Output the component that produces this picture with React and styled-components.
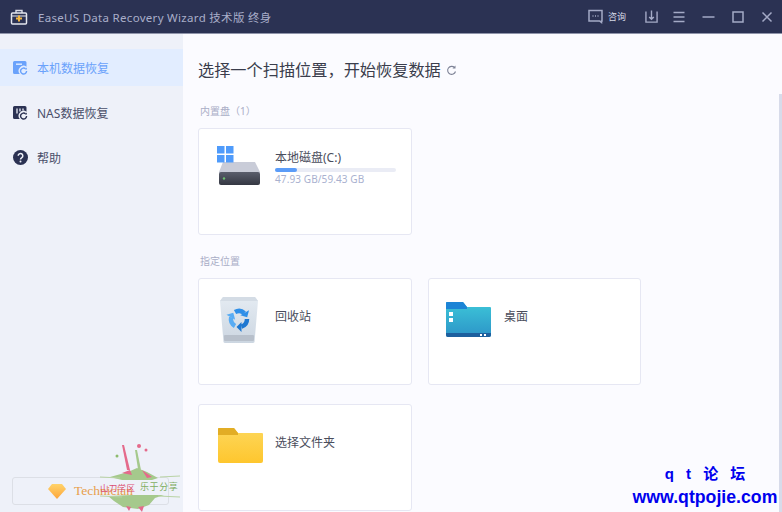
import React from "react";
import styled, { createGlobalStyle } from "styled-components";

const GlobalStyle = createGlobalStyle`
  html, body, #root {
    margin: 0;
    height: 100%;
  }
  body {
    font-family: "Noto Sans", "Noto Sans CJK SC", sans-serif;
    overflow: hidden;
  }
`;

const Page = styled.div`
  position: relative;
  width: 782px;
  height: 512px;
  display: flex;
  flex-direction: column;
  overflow: hidden;
  background: #fbfbff;
`;

const TitleBar = styled.header`
  height: 33px;
  flex: none;
  display: flex;
  align-items: center;
  padding: 0 9px 0 10px;
  background: #2b3253;
  border-bottom: 1px solid #8f94aa;
`;

const AppTitle = styled.span`
  margin-left: 10px;
  flex: 1;
  font-size: 11.5px;
  letter-spacing: 0.3px;
  color: #a9aec9;
`;

const Ask = styled.span`
  margin: 0 19px 0 5px;
  font-size: 9px;
  color: #d6d9e6;
`;

const BarIcon = styled.svg`
  display: block;
  flex: none;
  margin-left: ${(p) => p.$gap || 0}px;
  fill: none;
  stroke: #a4aac6;
  stroke-width: 1.5;
`;

const Body = styled.div`
  flex: 1;
  display: flex;
  min-height: 0;
`;

const Sidebar = styled.aside`
  width: 183px;
  flex: none;
  display: flex;
  flex-direction: column;
  padding-top: 15px;
  background: #eef1f9;
`;

const NavItem = styled.div`
  height: 37px;
  margin-bottom: 8px;
  display: flex;
  align-items: center;
  gap: 9px;
  padding-left: 13px;
  font-size: 12px;
  color: ${(p) => (p.$active ? "#6aa2fb" : "#4a4f6a")};
  background: ${(p) => (p.$active ? "#e2edff" : "transparent")};
`;

const UpgradeButton = styled.div`
  margin: auto 0 7px 12px;
  width: 157px;
  height: 28px;
  box-sizing: border-box;
  display: flex;
  align-items: center;
  justify-content: center;
  gap: 8px;
  border: 1px solid #dcdfe6;
  border-radius: 3px;
  font-family: "Liberation Serif", serif;
  font-size: 13.5px;
  color: #e8a04c;
`;

const Main = styled.main`
  flex: 1;
  padding: 0 0 0 15px;
`;

const Heading = styled.h1`
  margin: 23px 0 0;
  height: 24px;
  display: flex;
  align-items: center;
  gap: 5px;
  font-size: 16.2px;
  font-weight: 400;
  color: #3a3d4c;
`;

const SectionLabel = styled.div`
  font-size: 10px;
  line-height: 14px;
  color: #a9adc6;
  margin: ${(p) => p.$top}px 0 10px 2px;
`;

const CardGrid = styled.div`
  display: grid;
  grid-template-columns: 214px 213px;
  gap: 19px 16px;
`;

const Card = styled.div`
  height: 107px;
  box-sizing: border-box;
  display: flex;
  align-items: flex-start;
  padding: ${(p) => p.$top || 21}px 0 0 ${(p) => p.$left || 19}px;
  background: #fff;
  border: 1px solid #e6e7f3;
  border-radius: 3px;
`;

const CardIcon = styled.div`
  width: ${(p) => p.$width || 57}px;
  flex: none;
`;

const CardText = styled.div`
  flex: 1;
  padding: ${(p) => p.$top || 0}px 15px 0 0;
  font-size: 12px;
  line-height: 16px;
  color: #4a4d5c;
`;

const Track = styled.div`
  height: 4px;
  margin-top: 2px;
  background: #eaecf5;
  border-radius: 2px;
`;

const Fill = styled.div`
  height: 100%;
  background: #5b9cf8;
  border-radius: 2px;
`;

const Usage = styled.div`
  margin-top: 1px;
  font-size: 10px;
  line-height: 13px;
  letter-spacing: 0.1px;
  color: #a9b1cf;
`;

const ScrollThumb = styled.div`
  position: absolute;
  top: 94px;
  right: 0;
  bottom: 0;
  width: 3px;
  background: #d7dbea;
`;

const Splash = styled.svg`
  position: absolute;
  left: 96px;
  top: 440px;
  pointer-events: none;
`;

const SplashText = styled.span`
  position: absolute;
  left: 100px;
  top: 481px;
  font-size: 8.5px;
  letter-spacing: 0.3px;
  color: #dc4f72;
`;

const SplashNote = styled.span`
  position: absolute;
  left: 140px;
  top: 480px;
  font-size: 9px;
  letter-spacing: 0.6px;
  color: #7fae62;
`;

const Stamp = styled.div`
  position: absolute;
  right: 2px;
  bottom: 6px;
  width: 150px;
  text-align: center;
  font-family: "Liberation Sans", "Noto Sans CJK SC", sans-serif;
  font-weight: 700;
  color: #0000ee;
`;

const StampTitle = styled.div`
  font-size: 15px;
  line-height: 18px;
  word-spacing: 8px;
  margin-bottom: 5px;
`;

const StampUrl = styled.div`
  font-size: 17.7px;
  line-height: 18px;
`;

const BrandIcon = () => (
  <svg width="18" height="18" viewBox="0 0 18 18" fill="none" style={{ display: "block" }}>
    <path d="M6 5V2.500h6V5" stroke="#d9dbe6" strokeWidth="1.400" />
    <rect x="1.500" y="5" width="15" height="11" rx="1" stroke="#e4e6ee" strokeWidth="1.500" />
    <path d="M2 8h14" stroke="#e4e6ee" strokeWidth="1" />
    <path d="M9 7.500v6M6 10.500h6" stroke="#f4b63f" strokeWidth="2" />
  </svg>
);

const PcIcon = ({ color, nas }) => (
  <svg width="15" height="15" viewBox="0 0 15 15" style={{ display: "block" }}>
    <path d="M1.500 1h10.500a1.500 1.500 0 0 1 1.500 1.500v4.200A5 5 0 0 0 6.800 14H1.500A1.500 1.500 0 0 1 0 12.500v-10A1.500 1.500 0 0 1 1.500 1z" fill={color} />
    {nas ? (
      <path d="M4 3.500v5M7 3.500v3M10 3.500v2" stroke="#eef1f9" strokeWidth="1.300" />
    ) : (
      <rect x="3" y="3.500" width="6" height="1.400" fill="#e2edff" />
    )}
    <path d="M13.600 11a3 3 0 1 1-1-2.200" fill="none" stroke={color} strokeWidth="1.400" />
    <path d="M13.900 7.600v2h-2z" fill={color} />
  </svg>
);

const HelpIcon = () => (
  <svg width="15" height="15" viewBox="0 0 15 15" style={{ display: "block" }}>
    <circle cx="7.500" cy="7.500" r="7.500" fill="#2b3253" />
    <path d="M5.200 5.800a2.300 2.300 0 1 1 3.600 1.900c-.9.600-1.300 1-1.300 1.900" fill="none" stroke="#eef1f9" strokeWidth="1.500" />
    <circle cx="7.500" cy="11.600" r="1" fill="#eef1f9" />
  </svg>
);

const DiskIcon = () => (
  <svg width="44" height="41" viewBox="0 0 44 41" style={{ display: "block" }}>
    <defs>
      <linearGradient id="diskFront" x1="0" y1="0" x2="0" y2="1">
        <stop offset="0" stopColor="#5a5e6c" />
        <stop offset="1" stopColor="#343742" />
      </linearGradient>
    </defs>
    <path d="M6 16h32l5 10v1H2v-1z" fill="#c9ccd8" />
    <rect x="2" y="26" width="41" height="13" rx="2" fill="url(#diskFront)" />
    <circle cx="7" cy="32.500" r="1.200" fill="#6cc070" />
    <path d="M0 0h7.500v7.500H0zM9 0h7.500v7.500H9zM0 9h7.500v7.500H0zM9 9h7.500v7.500H9z" fill="#4f9bfb" />
  </svg>
);

const recycleArcs = [
  { angle: -120, color: "#2f8fe8" },
  { angle: 0, color: "#1f78d1" },
  { angle: 120, color: "#58acf4" },
];

const BinIcon = () => (
  <svg width="40" height="46" viewBox="0 0 40 46" style={{ display: "block" }}>
    <defs>
      <linearGradient id="binBody" x1="0" y1="0" x2="0" y2="1">
        <stop offset="0" stopColor="#e4ebf2" />
        <stop offset="1" stopColor="#ccd6e1" />
      </linearGradient>
    </defs>
    <path d="M3 0h32l3 4-3.500 41q0 1-2 1H5.500q-2 0-2-1L0 4z" fill="url(#binBody)" />
    <path d="M0 4 3 0h32l3 4z" fill="#d4dce5" />
    <rect x="4" y="38" width="30" height="6" rx="1" fill="#b8c0cb" />
    {recycleArcs.map((arc) => (
      <g key={arc.angle} transform={`rotate(${arc.angle} 19 22)`}>
        <circle cx="19" cy="22" r="8" fill="none" stroke={arc.color} strokeWidth="4.500" strokeDasharray="10 40.270" />
        <path d="M21.500 25v10L16.500 30z" fill={arc.color} />
      </g>
    ))}
  </svg>
);

const DesktopFolder = () => (
  <svg width="45" height="35" viewBox="0 0 45 35" style={{ display: "block" }}>
    <defs>
      <linearGradient id="deskBody" x1="0" y1="0" x2="0" y2="1">
        <stop offset="0" stopColor="#3dc6d8" />
        <stop offset="1" stopColor="#2c94c8" />
      </linearGradient>
    </defs>
    <path d="M1 0h16l4 5h23a1 1 0 0 1 1 1v27a2 2 0 0 1-2 2H2a2 2 0 0 1-2-2V1a1 1 0 0 1 1-1z" fill="url(#deskBody)" />
    <path d="M1 0h16l4 5 0 2H0V1a1 1 0 0 1 1-1z" fill="#1c84d6" />
    <path d="M0 31h45v2a2 2 0 0 1-2 2H2a2 2 0 0 1-2-2z" fill="#1d5f9e" />
    <path d="M3 10h4v4H3zM3 16h4v4H3zM34 32h2v2h-2zM38 32h2v2h-2z" fill="#fff" />
  </svg>
);

const YellowFolder = () => (
  <svg width="45" height="35" viewBox="0 0 45 35" style={{ display: "block" }}>
    <defs>
      <linearGradient id="yellowBody" x1="0" y1="0" x2="0" y2="1">
        <stop offset="0" stopColor="#fdd75a" />
        <stop offset="1" stopColor="#fec62e" />
      </linearGradient>
    </defs>
    <path d="M1 0h15l4 5h24a1 1 0 0 1 1 1v27a2 2 0 0 1-2 2H2a2 2 0 0 1-2-2V1a1 1 0 0 1 1-1z" fill="url(#yellowBody)" />
    <path d="M1 0h15l4 5 0 2H0V1a1 1 0 0 1 1-1z" fill="#e2ad25" />
  </svg>
);

export default function App() {
  return (
    <Page>
      <GlobalStyle />
      <TitleBar>
        <BrandIcon />
        <AppTitle>EaseUS Data Recovery Wizard 技术版 终身</AppTitle>
        <BarIcon width="15" height="15" viewBox="0 0 15 15">
          <path d="M1 1.500h13v10.500h-.5v1.500l-2-1.500H1z" />
          <path d="M4.500 7h1M7 7h1M9.500 7h1" />
        </BarIcon>
        <Ask>咨询</Ask>
        <BarIcon width="13" height="15" viewBox="0 0 14 15">
          <path d="M1 2v11.500h12V2M7 1v9M4.500 8 7 10.500 9.500 8" />
        </BarIcon>
        <BarIcon $gap={15} width="12" height="12" viewBox="0 0 12 12">
          <path d="M0.500 1.500h11M0.500 6h11M0.500 10.500h11" />
        </BarIcon>
        <BarIcon $gap={17} width="13" height="12" viewBox="0 0 13 12">
          <path d="M0.500 6h12" />
        </BarIcon>
        <BarIcon $gap={17} width="12" height="12" viewBox="0 0 12 12">
          <path d="M1 1h10v10H1z" />
        </BarIcon>
        <BarIcon $gap={17} width="12" height="12" viewBox="0 0 12 12">
          <path d="M1.500 1.500l9 9M10.500 1.500l-9 9" />
        </BarIcon>
      </TitleBar>
      <Body>
        <Sidebar>
          <NavItem $active>
            <PcIcon color="#6aa2fb" />
            本机数据恢复
          </NavItem>
          <NavItem>
            <PcIcon color="#2b3253" nas />
            NAS数据恢复
          </NavItem>
          <NavItem>
            <HelpIcon />
            帮助
          </NavItem>
          <UpgradeButton>
            <svg width="18" height="15" viewBox="0 0 18 15" style={{ display: "block" }}>
              <defs>
                <linearGradient id="gem" x1="0" y1="0" x2="0" y2="1">
                  <stop offset="0" stopColor="#ffd36a" />
                  <stop offset="1" stopColor="#fda53a" />
                </linearGradient>
              </defs>
              <path d="M4 0h10l4 5-9 10L0 5z" fill="url(#gem)" />
            </svg>
            Technician
          </UpgradeButton>
        </Sidebar>
        <Main>
          <Heading>
            选择一个扫描位置，开始恢复数据
            <svg width="11" height="11" viewBox="0 0 11 11" fill="none" style={{ marginTop: 3 }}>
              <path d="M9.500 6.500A4 4 0 1 1 8.500 2.500" stroke="#7d8296" strokeWidth="1.100" />
              <path d="M9.500 0.500v3h-3z" fill="#7d8296" />
            </svg>
          </Heading>
          <SectionLabel $top={23}>内置盘（1）</SectionLabel>
          <CardGrid>
            <Card $top={17} $left={18}>
              <CardIcon $width={58}>
                <DiskIcon />
              </CardIcon>
              <CardText $top={4}>
                本地磁盘(C:)
                <Track>
                  <Fill style={{ width: `${(47.93 / 59.43) * 23}%` }} />
                </Track>
                <Usage>47.93 GB/59.43 GB</Usage>
              </CardText>
            </Card>
          </CardGrid>
          <SectionLabel $top={19}>指定位置</SectionLabel>
          <CardGrid>
            <Card $top={18} $left={21}>
              <CardIcon $width={55}>
                <BinIcon />
              </CardIcon>
              <CardText $top={12}>回收站</CardText>
            </Card>
            <Card $top={23} $left={17}>
              <CardIcon $width={58}>
                <DesktopFolder />
              </CardIcon>
              <CardText $top={7}>桌面</CardText>
            </Card>
            <Card $top={23} $left={19}>
              <CardIcon>
                <YellowFolder />
              </CardIcon>
              <CardText $top={7}>选择文件夹</CardText>
            </Card>
          </CardGrid>
        </Main>
      </Body>
      <ScrollThumb />
      <Splash width="90" height="72" viewBox="0 0 90 72">
        <path d="M39 10l3 19 3 1-4-20z" fill="#a5c98c" />
        <path d="M26 5l5 25 3 0-6-25z" fill="#e46a8b" />
        <circle cx="43" cy="6" r="2" fill="#e46a8b" />
        <circle cx="50" cy="10" r="1.500" fill="#e46a8b" />
        <circle cx="21" cy="16" r="1.500" fill="#8dbb6e" />
        <path d="M14 37l18-5 9-4 10 4 11 6-6 2H26z" fill="#a5c98c" />
        <path d="M26 33l8-3 2 5zM46 30l10 7-5 1z" fill="#e46a8b" />
        <path d="M12 56l24-1h32l-9 3-6 7-11 4-15-2-9-6z" fill="#a5c98c" />
        <path d="M30 66l3 5 2-4zM42 67l4 5 2-6z" fill="#e46a8b" />
        <path d="M4 37l20 1M64 37l20-1M4 56l22 1M62 56l22 1" stroke="#b9d3a5" strokeWidth="1" fill="none" />
      </Splash>
      <SplashText>山刀学区</SplashText>
      <SplashNote>乐于分享</SplashNote>
      <Stamp>
        <StampTitle>q t 论 坛</StampTitle>
        <StampUrl>www.qtpojie.com</StampUrl>
      </Stamp>
    </Page>
  );
}
